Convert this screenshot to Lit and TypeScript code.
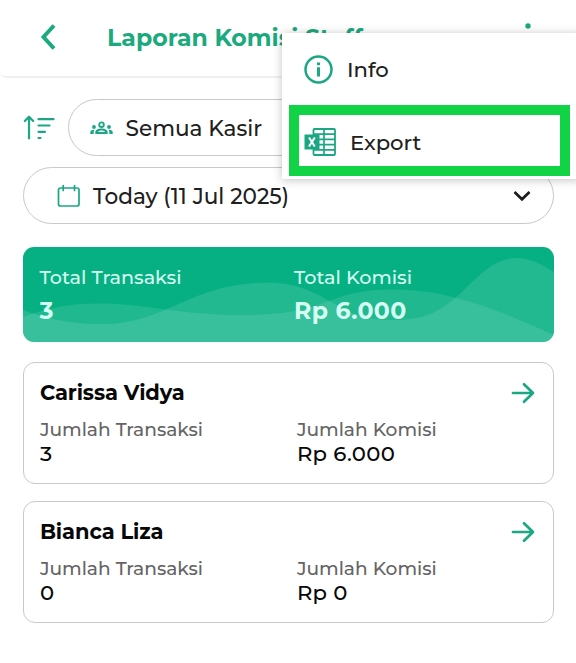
import { LitElement, html, css, svg } from "lit";
import { customElement, property } from "lit/decorators.js";

const waves = svg`
  <path fill="#fff" fill-opacity=".11" d="M0 63C22 71 45 77 78 77C145 77 165 36 245 35.500C280 35.500 300 51 317 60C340 74 370 75 394 71C440 62 455 11 493 11C508 11 520 18 531 25V95H0Z"/>
  <path fill="#fff" fill-opacity=".10" d="M0 70C30 59 50 56.500 80 56.500C125 57 155 68 220 68C310 68 300 42.500 370 42.500C420 42.500 465 58 531 88V95H0Z"/>`;

@customElement("commission-card")
export class CommissionCard extends LitElement {
  @property() name = "";
  @property() count = "";
  @property() amount = "";

  static styles = css`
    :host { display: block; box-sizing: border-box; height: 121.5px; border: 1.5px solid #c9c9c9; border-radius: 12px; padding: 15px 17px 0 16.4px; background: #fff; }
    .top { display: flex; justify-content: space-between; align-items: center; height: 30px; padding-right: 1px; margin-bottom: 9.500px; }
    .name { font-weight: 700; font-size: 21px; letter-spacing: -0.1px; color: #080808; white-space: nowrap; padding-bottom: 2px; }
    .grid { display: grid; grid-template-columns: 257px 1fr; line-height: 24px; }
    .label { font-size: 18.6px; font-weight: 500; color: #646464; }
    .value { font-size: 21.2px; line-height: 22px; font-weight: 500; letter-spacing: 0.3px; color: #080808; }
    svg { display: block; }
  `;

  render() {
    return html`
      <div class="top">
        <span class="name">${this.name}</span>
        <svg width="24" height="22" viewBox="0 0 24 22" fill="none" stroke="#1ba784" stroke-width="2.700" stroke-linecap="round" stroke-linejoin="round"><path d="M2 11H22M13 2.200L22 11L13 19.800"/></svg>
      </div>
      <div class="grid">
        <span class="label">Jumlah Transaksi</span><span class="label">Jumlah Komisi</span>
        <span class="value">${this.count}</span><span class="value">${this.amount}</span>
      </div>`;
  }
}

@customElement("app-root")
export class AppRoot extends LitElement {
  static styles = css`
    :host { display: block; position: relative; box-sizing: border-box; width: 576px; height: 663px; overflow: hidden; background: #fff; font-family: Montserrat, Inter, sans-serif; color: #202020; }
    * { box-sizing: border-box; }
    svg { display: block; flex: none; }
    header { display: flex; align-items: center; height: 78px; padding: 0 0 2px 40px; border-bottom: 2px solid #f0f0f0; border-radius: 0 0 6px 6px; }
    h1 { margin: 0 0 0 50px; padding-top: 2px; font-size: 23.6px; line-height: 30px; font-weight: 700; letter-spacing: 0; color: #1ba97e; white-space: nowrap; }
    .dots { margin-left: auto; margin-right: 45px; }
    main { display: flex; flex-direction: column; padding: 21px 22.5px 0 22.5px; }
    .filters { display: flex; align-items: center; margin-bottom: 11px; }
    .filters .pill { flex: 1; margin-left: 13px; padding-left: 21px; }
    .pill { display: flex; align-items: center; height: 57px; border: 1.500px solid #c9c9c9; border-radius: 29px; font-size: 21.6px; font-weight: 500; white-space: nowrap; }
    .pill span { padding-top: 1px; }
    .cashier { margin-left: 13px; }
    .date { padding: 0 22px 0 32px; }
    .day { margin-left: 13.5px; }
    .chev { margin-left: auto; }
    .summary { display: grid; grid-template-columns: 254.500px 1fr; align-content: start; position: relative; overflow: hidden; height: 95px; margin: 23px 0 20px; padding: 17.500px 17px 0; border-radius: 11px; background: #07b083; color: #d5fff2; }
    .waves { position: absolute; inset: 0; }
    .label { position: relative; font-size: 19.2px; line-height: 24px; font-weight: 500; }
    .value { position: relative; margin-top: 7px; font-size: 23.6px; line-height: 30px; font-weight: 700; letter-spacing: 0.4px; }
    commission-card + commission-card { margin-top: 17.500px; }
    .menu { position: absolute; left: 282px; top: 33px; width: 300px; height: 146px; padding: 0 12px 0 7px; background: #fff; box-shadow: 0 1px 9px rgba(0, 0, 0, .24); font-size: 21.2px; font-weight: 500; }
    .item { display: flex; align-items: center; }
    .info { height: 72px; padding-left: 15px; }
    .info span { margin-left: 14px; }
    .export { height: 71px; width: 281px; border: 10px solid #10d445; padding: 3px 0 0 5px; }
    .export span { margin-left: 14px; }
  `;

  render() {
    return html`
      <header>
        <svg width="17" height="28" viewBox="0 0 17 28" fill="none" stroke="#1ba97e" stroke-width="4"><path d="M14 2.500L3.500 14L14 25.500"/></svg>
        <h1>Laporan Komisi Staff</h1>
        <svg class="dots" width="6" height="28" viewBox="0 0 6 28" fill="#1ba97e"><circle cx="3" cy="3" r="2.700"/><circle cx="3" cy="14" r="2.700"/><circle cx="3" cy="25" r="2.700"/></svg>
      </header>
      <main>
        <div class="filters">
          <svg width="32" height="26" viewBox="0 0 32 26" fill="none" stroke="#1ba784" stroke-width="2.200" stroke-linecap="round" stroke-linejoin="round"><path d="M6 23.500V2M1.800 6L6 1.700L10.200 6M15.500 4.200H30.500M15.500 10.500H26.500M15.500 16.800H22M15.500 23H17.500"/></svg>
          <div class="pill">
            <svg width="23" height="14" viewBox="0 0 23 14" fill="#1ba784"><circle cx="11.500" cy="3.700" r="2.300" fill="none" stroke="#1ba784" stroke-width="1.900"/><path fill-rule="evenodd" d="M5.300 12.900V11.300C5.300 8.900 8.200 7.400 11.500 7.400S17.700 8.900 17.700 11.300V12.900ZM7.900 11.100H15.100C14.300 10.100 13.200 9.600 11.500 9.600S8.700 10.100 7.900 11.100Z"/><circle cx="4" cy="6" r="1.900"/><circle cx="19" cy="6" r="1.900"/><path d="M.300 12.900V11.200C.300 9.500 2 8.500 4.800 8.700C4 9.500 3.700 10.200 3.700 11.300V12.900ZM22.700 12.900V11.200C22.700 9.500 21 8.500 18.200 8.700C19 9.500 19.300 10.200 19.300 11.300V12.900Z"/></svg>
            <span class="cashier">Semua Kasir</span>
          </div>
        </div>
        <div class="pill date">
          <svg width="24" height="24" viewBox="0 0 24 24" fill="none" stroke="#1ba784" stroke-width="1.700" stroke-linecap="round"><rect x="2.500" y="4" width="20.500" height="18" rx="2"/><path d="M7.200 1.500V6.500M18.500 1.500V6.500"/></svg>
          <span class="day">Today (11 Jul 2025)</span>
          <svg class="chev" width="18" height="12" viewBox="0 0 18 12" fill="none" stroke="#1c1c1c" stroke-width="2.700"><path d="M1.500 2L9 9.300L16.500 2"/></svg>
        </div>
        <section class="summary">
          <svg class="waves" width="531" height="95" viewBox="0 0 531 95">${waves}</svg>
          <span class="label">Total Transaksi</span><span class="label">Total Komisi</span>
          <span class="value">3</span><span class="value">Rp 6.000</span>
        </section>
        <commission-card name="Carissa Vidya" count="3" amount="Rp 6.000"></commission-card>
        <commission-card name="Bianca Liza" count="0" amount="Rp 0"></commission-card>
      </main>
      <div class="menu">
        <div class="item info">
          <svg width="29" height="29" viewBox="0 0 29 29" fill="none" stroke="#1ba784"><circle cx="14.500" cy="14.500" r="13" stroke-width="2.500"/><path stroke-width="3" d="M14.500 12.300V21.500M14.500 7.500V10.300"/></svg>
          <span>Info</span>
        </div>
        <div class="item export">
          <svg width="32" height="28" viewBox="0 0 32 28"><rect x="9.500" y="1" width="21.500" height="26" rx="1" fill="#fff" stroke="#1ba784" stroke-width="1.800"/><path d="M9.500 6.200H31M9.500 11.400H31M9.500 16.600H31M9.500 21.800H31M20 1V27" fill="none" stroke="#1ba784" stroke-width="1.700"/><path fill="#1ba784" d="M.500 6.500H15.500V21.500H.500Z"/><path d="M5 9.500L10.800 18.500M10.800 9.500L5 18.500" fill="none" stroke="#fff" stroke-width="2"/></svg>
          <span>Export</span>
        </div>
      </div>`;
  }
}
